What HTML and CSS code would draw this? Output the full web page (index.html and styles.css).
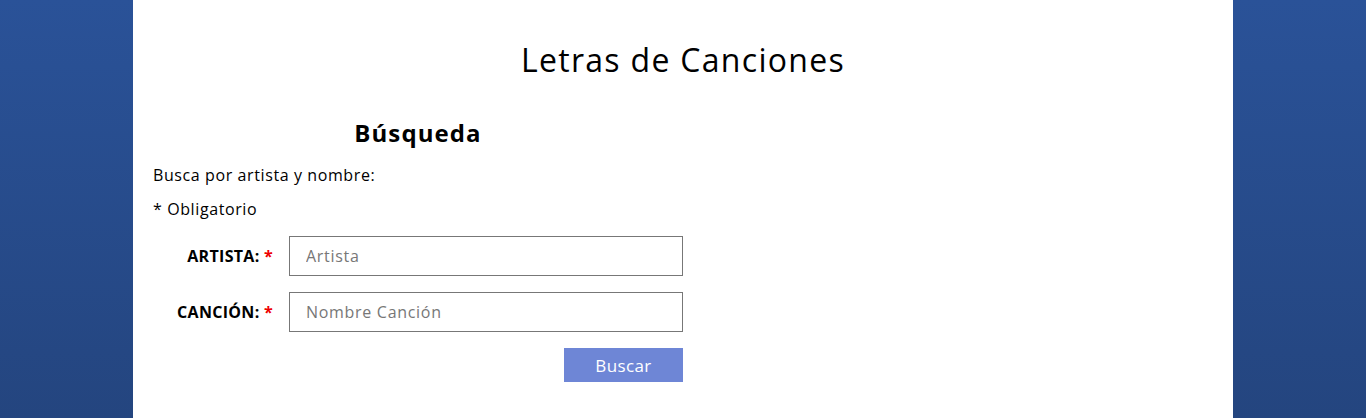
FILE: index.html
```html
<!DOCTYPE html>
<html lang="es">
<head>
<meta charset="utf-8">
<title>Letras de Canciones</title>
<link rel="stylesheet" href="styles.css">
</head>
<body>
<div class="page">
  <h1 class="title">Letras de Canciones</h1>
  <section class="search">
    <h2 class="search-title">Búsqueda</h2>
    <p class="text">Busca por artista y nombre:</p>
    <p class="text">* Obligatorio</p>
    <form class="form">
      <div class="row">
        <label class="label" for="artista">ARTISTA: <span class="req">*</span></label>
        <input class="input" id="artista" type="text" placeholder="Artista">
      </div>
      <div class="row">
        <label class="label" for="cancion">CANCIÓN: <span class="req">*</span></label>
        <input class="input" id="cancion" type="text" placeholder="Nombre Canción">
      </div>
      <div class="actions">
        <button class="btn" type="button">Buscar</button>
      </div>
    </form>
  </section>
</div>
</body>
</html>
```
FILE: styles.css
```css
* { box-sizing: border-box; }
html, body { margin: 0; padding: 0; }
body {
  font-family: "Open Sans", "Liberation Sans", sans-serif;
  background: linear-gradient(to bottom, #2a5298 0%, #24457f 418px, #1e3c72 600px);
  min-height: 418px;
  color: #000;
  letter-spacing: 0.6px;
}
.page {
  width: 1100px;
  margin: 0 auto;
  background: #fff;
  min-height: 418px;
  padding: 40px 20px 20px;
}
.title {
  margin: 0;
  text-align: center;
  font-size: 32px;
  font-weight: 400;
  line-height: 40px;
  letter-spacing: 1.3px;
}
.search {
  width: 530px;
  margin-top: 38px;
}
.search-title {
  margin: 0 0 16px;
  text-align: center;
  font-size: 24px;
  font-weight: 700;
  line-height: 30px;
  letter-spacing: 1.1px;
}
.text {
  margin: 0 0 12px;
  font-size: 16px;
  line-height: 22px;
}
.form { margin-top: 16px; }
.row {
  display: grid;
  grid-template-columns: 136px 1fr;
  align-items: center;
  margin-bottom: 16px;
}
.label {
  text-align: right;
  padding-right: 16px;
  font-weight: 700;
  font-size: 16px;
  letter-spacing: 0.3px;
}
.req { color: #e00; }
.input {
  height: 40px;
  border: 1px solid #777;
  padding: 0 16px;
  font-family: inherit;
  font-size: 16px;
  letter-spacing: 0.7px;
  color: #333;
}
.input::placeholder { color: #777; }
.actions { display: flex; justify-content: flex-end; }
.btn {
  width: 119px;
  height: 34px;
  border: none;
  background: #6e86d6;
  color: #fff;
  font-family: inherit;
  font-size: 17px;
  letter-spacing: 0.4px;
}
```
